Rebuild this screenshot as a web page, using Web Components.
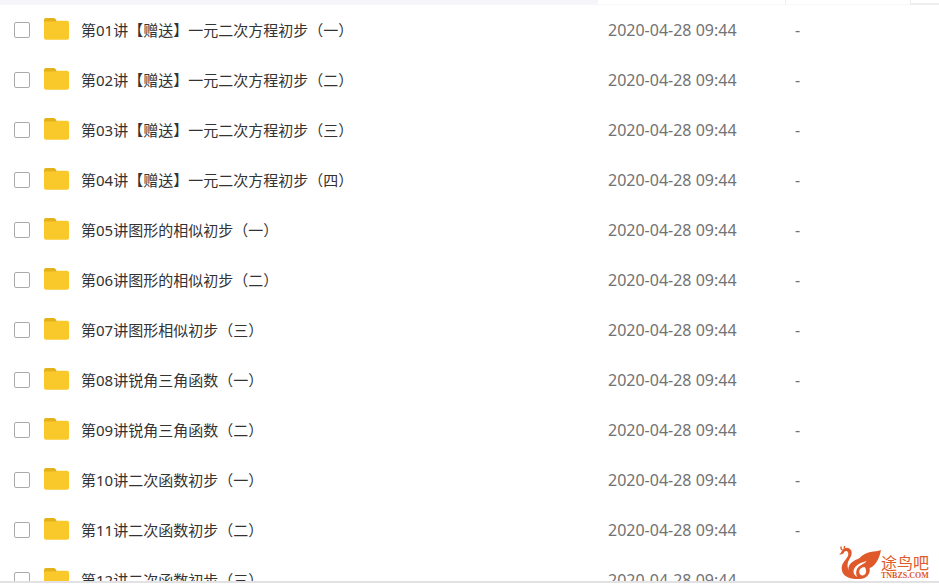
<!DOCTYPE html>
<html lang="zh-CN">
<head>
<meta charset="utf-8">
<title>文件列表</title>
<style>
  html, body { margin: 0; height: 100%; }
  body {
    background: #ffffff;
    color: #333333;
    font: 15px/20px "Noto Sans", "Noto Sans CJK SC", sans-serif;
  }
</style>
</head>
<body>
<file-browser>
  <file-list></file-list>
  <site-mark slot="mark" name="途鸟吧" domain="TNBZS.COM"></site-mark>
</file-browser>

<script>
// Colors
const COLOR_HEAD = "#f5f5fa";
const COLOR_RULE = "#e2e2e4";
const COLOR_HEAD_RULE = "#eeeef1";
const COLOR_MUTED = "#727272";
const COLOR_BRAND = "#e0592a";

// Folders
const MODIFIED = "2020-04-28 09:44";
const FOLDERS = [
  "第01讲【赠送】一元二次方程初步（一）",
  "第02讲【赠送】一元二次方程初步（二）",
  "第03讲【赠送】一元二次方程初步（三）",
  "第04讲【赠送】一元二次方程初步（四）",
  "第05讲图形的相似初步（一）",
  "第06讲图形的相似初步（二）",
  "第07讲图形相似初步（三）",
  "第08讲锐角三角函数（一）",
  "第09讲锐角三角函数（二）",
  "第10讲二次函数初步（一）",
  "第11讲二次函数初步（二）",
  "第12讲二次函数初步（三）"
];

class FileBrowser extends HTMLElement {

  constructor() {
    super();
    this.attachShadow({ mode: 'open' });
    this.shadowRoot.innerHTML = `
      <style>
        :host {
          display: flex; flex-direction: column; position: relative;
          height: 100%; box-sizing: border-box; padding-bottom: 2px;
        }
        .view {
          flex: 1; min-height: 0; overflow: hidden;
          border-bottom: 2px solid ${COLOR_RULE};
        }
        ::slotted([slot="mark"]) { position: absolute; right: 10px; bottom: 5px; }
      </style>
      <main class="view"><slot></slot></main>
      <slot name="mark"></slot>
    `;
  }

}

class FolderIcon extends HTMLElement {

  constructor() {
    super();
    this.attachShadow({ mode: 'open' });
    this.shadowRoot.innerHTML = `
      <style>
        :host { display: block; width: 26px; height: 24px; }
        svg { display: block; width: 26px; height: 22px; }
      </style>
      <svg viewBox="0 0 26 22" aria-hidden="true">
        <path fill="#e3b21b" d="M2 0h7.500q1.500 0 2.200 1.200L13.200 4v3H0V2q0-2 2-2z"/>
        <path fill="#f9c92b" d="M0 4.500q0-1 1-1h9.500q1 0 1.800-.5.600-.300 1.400-.3H23q2 0 2 2v15q0 2-2 2H2q-2 0-2-2z"/>
      </svg>
    `;
  }

}

class FileList extends HTMLElement {

  constructor() {
    super();
    this.attachShadow({ mode: 'open' });
    this.shadowRoot.innerHTML = `
      <style>
        :host { display: block; }
        table { width: 100%; border-spacing: 0; table-layout: fixed; }
        .date { width: 187px; }
        .size { width: 125px; }
        .more { width: 29px; }
        th { height: 5px; padding: 0; box-sizing: border-box; }
        th:first-child { background: ${COLOR_HEAD}; }
        th:nth-child(n+2) { border-bottom: 1px solid #f8f8fa; }
        th:nth-child(n+3) { border-left: 1px solid ${COLOR_HEAD_RULE}; }
        th:last-child { border-bottom: 2px solid ${COLOR_HEAD_RULE}; }
        td {
          height: 50px; padding: 0 10px; box-sizing: border-box;
          color: ${COLOR_MUTED}; font-size: 16px; white-space: nowrap;
        }
        td:first-child { padding: 0 14px; color: inherit; font-size: inherit; }
        .name { display: flex; align-items: center; }
        input {
          appearance: none; flex: none; width: 16px; height: 16px;
          margin: 0 14px 0 0; border: 1px solid #aaaaaa; border-radius: 2px;
          background: #ffffff;
        }
        input:checked { background: #3b8cff; border-color: #3b8cff; }
        folder-icon { flex: none; margin-right: 11px; }
      </style>
      <table>
        <colgroup>
          <col /><col class="date" /><col class="size" /><col class="more" />
        </colgroup>
        <thead>
          <tr><th></th><th></th><th></th><th></th></tr>
        </thead>
        <tbody></tbody>
      </table>
    `;
    this._tbody = this.shadowRoot.querySelector('tbody');
  }

  connectedCallback() {
    this._tbody.innerHTML = '';
    FOLDERS.forEach( (name, i) => this.addFolder(name, i) );
  }

  addFolder(name, i) {
    const tr = document.createElement('tr');
    tr.innerHTML = `
      <td>
        <div class="name">
          <input type="checkbox" id="folder-${i}">
          <folder-icon></folder-icon>
          <label for="folder-${i}">${name}</label>
        </div>
      </td>
      <td>${MODIFIED}</td>
      <td>-</td>
      <td></td>
    `;
    this._tbody.appendChild(tr);
  }

}

class SiteMark extends HTMLElement {

  constructor() {
    super();
    this.attachShadow({ mode: 'open' });
    this.shadowRoot.innerHTML = `
      <style>
        :host { display: flex; align-items: flex-end; color: ${COLOR_BRAND}; }
        svg { display: block; width: 42px; height: 34px; }
        .text { display: flex; flex-direction: column; }
        .title { font-size: 16px; line-height: 18px; }
        .domain { font: bold 8px/8px "Liberation Serif", serif; }
      </style>
      <svg viewBox="0 0 126 102" aria-hidden="true">
        <g fill="currentColor">
          <path d="M0 25Q7 21 9 14C14 2 32 2 37 14C41 27 32 36 28 46C20 66 32 88 58 99C28 101 7 87 8 66C9 49 22 41 27 29C31 18 22 11 16 17Q13 27 0 25z"/>
          <path d="M126 12C108 20 82 12 61 37C44 44 30 52 28 68C26 88 42 100 62 99C80 99 95 86 92 66C107 61 120 43 126 12z"/>
        </g>
        <path fill="#ffffff" d="M83 45C64 50 49 58 44 72C42 81 46 88 54 93C49 80 52 68 61 61C69 54 77 53 83 45z"/>
        <path fill="#ffffff" d="M78 64C67 62 59 71 61 80C63 90 76 91 80 82C83 75 81 70 78 64z"/>
        <path fill="none" stroke="currentColor" stroke-width="4" d="M10 12Q4 8 7 2M17 7Q14 3 18 0"/>
      </svg>
      <div class="text"><span class="title"></span><span class="domain"></span></div>
    `;
  }

  connectedCallback() {
    this.shadowRoot.querySelector('.title').textContent = this.getAttribute('name');
    this.shadowRoot.querySelector('.domain').textContent = this.getAttribute('domain');
  }

}

customElements.define('folder-icon', FolderIcon);
customElements.define('file-list', FileList);
customElements.define('site-mark', SiteMark);
customElements.define('file-browser', FileBrowser);
</script>
</body>
</html>
